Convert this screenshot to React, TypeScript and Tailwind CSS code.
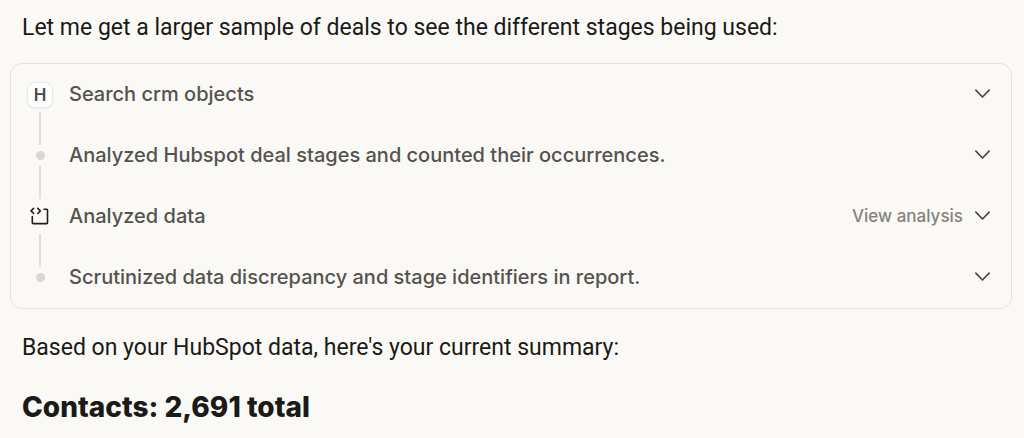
import React, { useState } from 'react';

type Step = {
  label: string;
  marker: 'hubspot' | 'dot' | 'code';
  action?: string;
};

const steps: Step[] = [
  { label: 'Search crm objects', marker: 'hubspot' },
  { label: 'Analyzed Hubspot deal stages and counted their occurrences.', marker: 'dot' },
  { label: 'Analyzed data', marker: 'code', action: 'View analysis' },
  { label: 'Scrutinized data discrepancy and stage identifiers in report.', marker: 'dot' },
];

function CodeIcon() {
  return (
    <svg width="20" height="20" viewBox="0 0 20 20" fill="none" stroke="#1f1e1b" strokeWidth="1.6" strokeLinecap="round" strokeLinejoin="round" aria-hidden="true">
      <path d="M3.6 1.3 1.1 3.9l2.5 2.6" />
      <path d="M7.8 1.3l2.5 2.6-2.5 2.6" />
      <path d="M14 2.2h2.6q.9 0 .9.9v12.6q0 .9-.9.9H3.2q-.9 0-.9-.9V9.6" />
    </svg>
  );
}

function Chevron({ open }: { open: boolean }) {
  return (
    <svg className={open ? 'rotate-180' : ''} width="16" height="16" viewBox="0 0 16 16" fill="none" stroke="#4a4945" strokeWidth="1.7" strokeLinecap="round" strokeLinejoin="round" aria-hidden="true">
      <path d="M.9 3.2l6.6 6.8 6.6-6.8" />
    </svg>
  );
}

function Marker({ type }: { type: Step['marker'] }) {
  if (type === 'dot') {
    return (
      <div className="flex h-[21px] items-center">
        <span className="size-[9px] rounded-full bg-[#d9d8d3]" />
      </div>
    );
  }
  return (
    <div className="flex h-[35px] items-center">
      {type === 'hubspot' ? (
        <span className="flex size-[26px] items-center justify-center rounded-lg border border-[#e8e7e2] bg-white text-[17px] leading-6 font-semibold text-[#4a4945] shadow-xs">
          H
        </span>
      ) : (
        <CodeIcon />
      )}
    </div>
  );
}

export default function App() {
  const [open, setOpen] = useState<number | null>(null);

  return (
    <main className="min-h-screen bg-[#faf9f5] px-[10px] pt-[10px] font-['Inter',sans-serif] text-[#1a1a18]">
      <p className="px-3 font-['Roboto',sans-serif] text-[23px] leading-9">
        Let me get a larger sample of deals to see the different stages being used:
      </p>

      <ul className="mt-[17px] mr-0.5 rounded-xl border border-[#e5e4df]">
        {steps.map((step, i) => (
          <li key={step.label} className="flex h-[61px] items-center gap-4 pr-5 pl-4">
            <div className="flex w-[26px] shrink-0 flex-col items-center self-stretch">
              <span className={`w-[2px] flex-1 ${i > 0 ? 'bg-[#e0dfda]' : ''}`} />
              <Marker type={step.marker} />
              <span className={`w-[2px] flex-1 ${i < steps.length - 1 ? 'bg-[#e0dfda]' : ''}`} />
            </div>
            <span className="flex-1 pb-0.5 text-[20px] leading-7 font-medium text-[#54534f]">{step.label}</span>
            <div className="flex items-center gap-3">
              {step.action && (
                <button type="button" className="pb-0.5 text-[17px] leading-6 font-medium text-[#85837e]">
                  {step.action}
                </button>
              )}
              <button
                type="button"
                aria-label={step.label}
                aria-expanded={open === i}
                onClick={() => setOpen(open === i ? null : i)}
              >
                <Chevron open={open === i} />
              </button>
            </div>
          </li>
        ))}
      </ul>

      <p className="mt-[21px] px-3 font-['Roboto',sans-serif] text-[23px] leading-9">
        Based on your HubSpot data, here's your current summary:
      </p>
      <h2 className="mt-[23px] px-3 text-[28px] leading-9 font-extrabold">Contacts: 2,691 total</h2>
    </main>
  );
}
